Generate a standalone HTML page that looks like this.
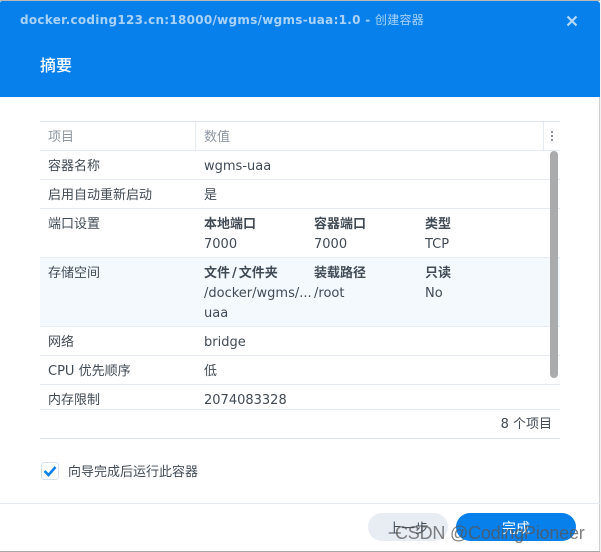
<!DOCTYPE html>
<html><head><meta charset="utf-8">
<style>
html,body{margin:0;padding:0;background:#fff}
#p{position:relative;width:601px;height:552px;overflow:hidden;background:#fff;font-family:"DejaVu Sans","Noto Sans CJK SC",sans-serif;font-size:13px;color:#414b55}
#p div{position:absolute;white-space:nowrap}
.t{line-height:20px;height:20px;margin-top:2px}
.b{font-weight:700}
.l{left:40px;width:520px;height:1px;background:#e6ebf1}
.g{color:#8e97a2}
</style></head><body><div id="p">
<div style="left:0;top:0;width:601px;height:1px;background:#b8b8b8"></div>
<div style="left:0;top:1px;width:600px;height:96px;background:#0780ec;border-radius:2px 3px 0 0"></div>
<div style="left:600px;top:0;width:1px;height:552px;background:#f2f2f2"></div>
<div style="left:599px;top:97px;width:1px;height:455px;background:#cfcfcf"></div>
<div style="left:0;top:551px;width:600px;height:1px;background:#a8a8a8"></div>
<div class="t b" style="left:20px;top:8px;color:#a9d2f8;font-size:12px;letter-spacing:.28px">docker.coding123.cn:18000/wgms/wgms-uaa:1.0 - <span style="font-weight:400">创建容器</span></div>
<svg style="position:absolute;left:566px;top:15px" width="12" height="12" viewBox="0 0 12 12"><path d="M1.5 1.5L10.5 10.5M10.5 1.5L1.5 10.5" stroke="#b5d9fa" stroke-width="2.2" fill="none"/></svg>
<div style="left:40px;top:55px;line-height:22px;color:#fff;font-size:16px;font-weight:500">摘要</div>

<div style="left:40px;top:258px;width:520px;height:68px;background:#f4f9fe"></div>
<div class="l" style="top:121px;background:#dde3e9"></div>
<div class="l" style="top:150px"></div>
<div class="l" style="top:179px"></div>
<div class="l" style="top:208px"></div>
<div class="l" style="top:257px"></div>
<div class="l" style="top:326px"></div>
<div class="l" style="top:355px"></div>
<div class="l" style="top:384px"></div>
<div class="l" style="top:409px"></div>
<div class="l" style="top:438px;background:#d5e2ee"></div>
<div style="left:195px;top:122px;width:1px;height:28px;background:#e6ebf1"></div>
<div style="left:543px;top:122px;width:1px;height:28px;background:#e6ebf1"></div>
<div style="left:551px;top:131px;width:2px;height:2px;background:#8a929b"></div>
<div style="left:551px;top:135px;width:2px;height:2px;background:#8a929b"></div>
<div style="left:551px;top:139px;width:2px;height:2px;background:#8a929b"></div>
<div style="left:550px;top:151px;width:8px;height:227px;background:#aaabac;border-radius:4px"></div>

<div class="t g" style="left:48px;top:126px">项目</div>
<div class="t g" style="left:204px;top:126px">数值</div>
<div class="t" style="left:48px;top:155px">容器名称</div>
<div class="t" style="left:204px;top:155px">wgms-uaa</div>
<div class="t" style="left:48px;top:184px">启用自动重新启动</div>
<div class="t" style="left:204px;top:184px">是</div>
<div class="t" style="left:48px;top:213px">端口设置</div>
<div class="t b" style="left:204px;top:213px">本地端口</div>
<div class="t b" style="left:314px;top:213px">容器端口</div>
<div class="t b" style="left:425px;top:213px">类型</div>
<div class="t" style="left:204px;top:233px">7000</div>
<div class="t" style="left:314px;top:233px">7000</div>
<div class="t" style="left:425px;top:233px">TCP</div>
<div class="t" style="left:48px;top:262px">存储空间</div>
<div class="t b" style="left:204px;top:262px">文件<span style="margin:0 2px">/</span>文件夹</div>
<div class="t b" style="left:314px;top:262px">装载路径</div>
<div class="t b" style="left:425px;top:262px">只读</div>
<div class="t" style="left:204px;top:282px">/docker/wgms/...</div>
<div class="t" style="left:314px;top:282px">/root</div>
<div class="t" style="left:425px;top:282px">No</div>
<div class="t" style="left:204px;top:302px">uaa</div>
<div class="t" style="left:48px;top:331px">网络</div>
<div class="t" style="left:204px;top:331px">bridge</div>
<div class="t" style="left:48px;top:360px">CPU 优先顺序</div>
<div class="t" style="left:204px;top:360px">低</div>
<div class="t" style="left:48px;top:389px">内存限制</div>
<div class="t" style="left:204px;top:389px">2074083328</div>
<div class="t" style="right:49px;top:413px">8 个项目</div>

<div style="left:41px;top:462px;width:16px;height:16px;border:1px solid #d5e2ee;border-radius:3px;background:#fff"></div>
<svg style="position:absolute;left:41px;top:462px" width="18" height="18" viewBox="0 0 18 18"><path d="M3.500 9L7.500 13L14.500 5" stroke="#0780ec" stroke-width="2.600" fill="none"/></svg>
<div class="t" style="left:68px;top:461px">向导完成后运行此容器</div>

<div style="left:0;top:503px;width:600px;height:1px;background:#e6ebf1"></div>
<div style="left:368px;top:513px;width:80px;height:28px;border-radius:14px;background:#e8edf4"></div>
<div style="left:456px;top:513px;width:120px;height:28px;border-radius:14px;background:#0780ec"></div>
<div class="t" style="left:388px;top:517px;width:40px;text-align:center;font-size:13.500px">上一步</div>
<div class="t" style="left:456px;top:517px;width:120px;text-align:center;color:#fff;font-size:14px">完成</div>
<div style="left:395px;top:522px;line-height:22px;font-family:'Liberation Sans',sans-serif;font-size:18px;letter-spacing:-.2px;color:rgba(85,85,85,.75)">CSDN @CodingPioneer</div>
</div></body></html>
